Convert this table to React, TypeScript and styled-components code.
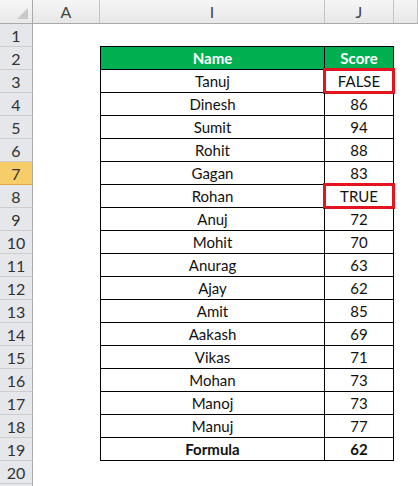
import styled, { createGlobalStyle, css } from "styled-components";

const GlobalStyle = createGlobalStyle`
  html, body {
    margin: 0;
    padding: 0;
    background: #ffffff;
  }
  body {
    font-family: Lato, "Open Sans", "Liberation Sans", sans-serif;
  }
`;

type Score = { name: string; score: string; boxed?: boolean; bold?: boolean };

const rows: Score[] = [
  { name: "Tanuj", score: "FALSE", boxed: true },
  { name: "Dinesh", score: "86" },
  { name: "Sumit", score: "94" },
  { name: "Rohit", score: "88" },
  { name: "Gagan", score: "83" },
  { name: "Rohan", score: "TRUE", boxed: true },
  { name: "Anuj", score: "72" },
  { name: "Mohit", score: "70" },
  { name: "Anurag", score: "63" },
  { name: "Ajay", score: "62" },
  { name: "Amit", score: "85" },
  { name: "Aakash", score: "69" },
  { name: "Vikas", score: "71" },
  { name: "Mohan", score: "73" },
  { name: "Manoj", score: "73" },
  { name: "Manuj", score: "77" },
  { name: "Formula", score: "62", bold: true },
];

function App() {
  return (
    <>
      <GlobalStyle />
      <Sheet>
        <Row $height={24}>
          <Corner>
            <CornerMark />
          </Corner>
          <ColHead>A</ColHead>
          <ColHead>I</ColHead>
          <ColHead>J</ColHead>
          <ColHead />
        </Row>

        <Row>
          <RowHead>1</RowHead>
          <Cell />
          <Cell />
          <Cell />
          <Cell />
        </Row>

        <Row>
          <RowHead>2</RowHead>
          <Cell />
          <TableCell $head $first $top>
            Name
          </TableCell>
          <TableCell $head $top>
            Score
          </TableCell>
          <Cell />
        </Row>

        {rows.map((r, i) => (
          <Row key={i}>
            <RowHead $active={i + 3 === 7}>{i + 3}</RowHead>
            <Cell />
            <TableCell $first $bold={r.bold}>
              {r.name}
            </TableCell>
            <TableCell $bold={r.bold}>
              {r.score}
              {r.boxed && <RedBox />}
            </TableCell>
            <Cell />
          </Row>
        ))}

        <Row>
          <RowHead>20</RowHead>
          <Cell />
          <Cell />
          <Cell />
          <Cell />
        </Row>
        <Row>
          <RowHead />
          <Cell />
          <Cell />
          <Cell />
          <Cell />
        </Row>
      </Sheet>
    </>
  );
}

export default App;

const Sheet = styled.div`
  width: 418px;
  height: 486px;
  overflow: hidden;
  background: #ffffff;
`;

const Row = styled.div<{ $height?: number }>`
  display: grid;
  grid-template-columns: 33px 67px 225px 69px 1fr;
  height: ${(p) => p.$height ?? 23}px;
`;

const headerBase = css`
  box-sizing: border-box;
  display: flex;
  align-items: center;
  justify-content: center;
  color: #444444;
  font-size: 16px;
`;

const Corner = styled.div`
  ${headerBase};
  position: relative;
  background: linear-gradient(#f6f6f6, #e9e9e9);
  border-right: 1px solid #a9a9a9;
  border-bottom: 1px solid #a9a9a9;
`;

const CornerMark = styled.div`
  position: absolute;
  right: 4px;
  bottom: 4px;
  width: 0;
  height: 0;
  border-left: 11px solid transparent;
  border-bottom: 11px solid #c9c9c9;
`;

const ColHead = styled.div`
  ${headerBase};
  background: linear-gradient(#f6f6f6, #e7e7e7);
  border-right: 1px solid #c4c4c4;
  border-bottom: 1px solid #a9a9a9;
`;

const RowHead = styled.div<{ $active?: boolean }>`
  ${headerBase};
  background: ${(p) => (p.$active ? "#f7cd6a" : "#e6e7ea")};
  border-right: 1px solid #a9a9a9;
  border-bottom: 1px solid ${(p) => (p.$active ? "#e0a93e" : "#cdcdcd")};
  color: #333333;
`;

const Cell = styled.div`
  background: #ffffff;
`;

const TableCell = styled.div<{
  $head?: boolean;
  $first?: boolean;
  $top?: boolean;
  $bold?: boolean;
}>`
  position: relative;
  box-sizing: border-box;
  display: flex;
  align-items: center;
  justify-content: center;
  font-size: 15px;
  color: #111111;
  border-right: 1px solid #000000;
  border-bottom: 1px solid #000000;
  border-left: ${(p) => (p.$first ? "1px solid #000000" : "none")};
  border-top: ${(p) => (p.$top ? "1px solid #000000" : "none")};
  margin-top: ${(p) => (p.$top ? "-1px" : "0")};
  height: ${(p) => (p.$top ? "24px" : "auto")};
  font-weight: ${(p) => (p.$bold || p.$head ? 700 : 400)};
  ${(p) =>
    p.$head &&
    css`
      background: #00b050;
      color: #ffffff;
    `}
`;

const RedBox = styled.div`
  position: absolute;
  left: -2px;
  right: -2px;
  top: -2px;
  bottom: -2px;
  border: 3px solid #e3141e;
`;
